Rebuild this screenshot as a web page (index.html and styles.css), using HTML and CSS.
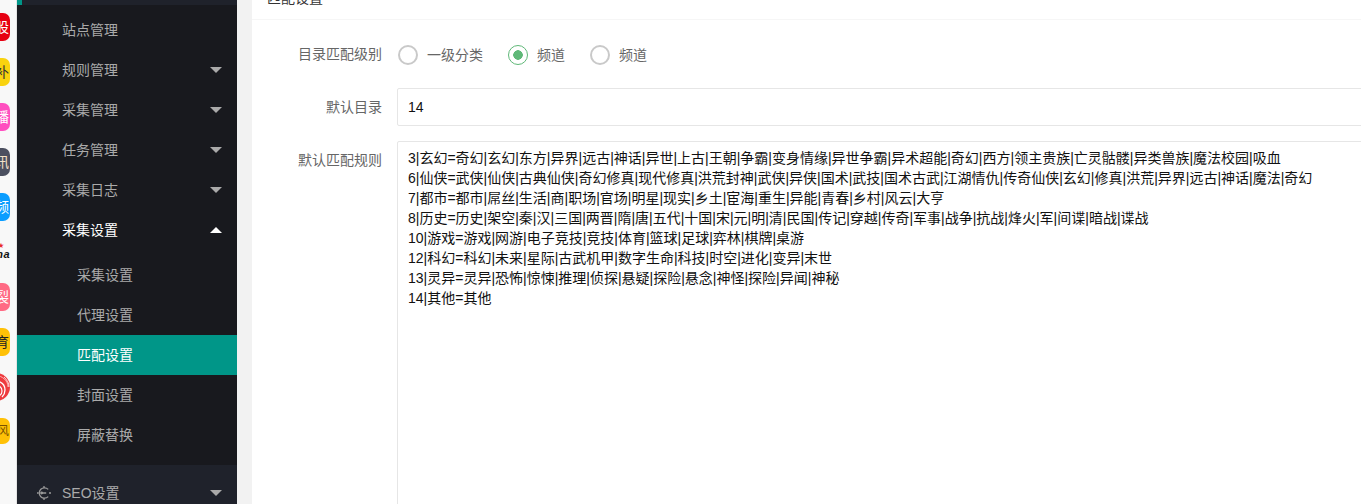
FILE: index.html
```html
<!DOCTYPE html>
<html lang="zh-CN">
<head>
<meta charset="utf-8">
<title>匹配设置</title>
<link rel="stylesheet" href="styles.css">
</head>
<body>
<div class="app">
  <aside class="rail">
    <div class="tile red">股</div>
    <div class="tile yellow">补</div>
    <div class="tile pink">播</div>
    <div class="tile slate">讯</div>
    <div class="tile blue">频</div>
    <div class="logo"><span class="logo-mark">★</span><span class="logo-word">na</span></div>
    <div class="tile rose">裂</div>
    <div class="tile amber">育</div>
    <div class="swirl">
      <svg viewBox="0 0 28 30" width="28" height="30">
        <circle cx="14" cy="15" r="14" fill="#ee3a3e"/>
        <path d="M13 3c8 1 13 6 13 12" fill="none" stroke="#ffb3b3" stroke-width="1"/>
        <path d="M15 9c5 1 8 4 8 9 0 3-1 5-3 7" fill="none" stroke="#fff" stroke-width="1.3"/>
        <path d="M15 13c3 1 5 3 5 6 0 2-1 4-3 5" fill="none" stroke="#fff" stroke-width="1.2"/>
        <path d="M22 5c3 3 5 6 5 10" fill="none" stroke="#fff" stroke-width=".8"/>
      </svg>
    </div>
    <div class="tile amber small">风</div>
  </aside>

  <nav class="sidebar">
    <div class="strip"><span class="strip-mark"></span></div>
    <ul class="menu">
      <li class="item">站点管理</li>
      <li class="item">规则管理<span class="caret"></span></li>
      <li class="item">采集管理<span class="caret"></span></li>
      <li class="item">任务管理<span class="caret"></span></li>
      <li class="item">采集日志<span class="caret"></span></li>
      <li class="item open">采集设置<span class="caret up"></span></li>
    </ul>
    <ul class="submenu">
      <li class="subitem">采集设置</li>
      <li class="subitem">代理设置</li>
      <li class="subitem active">匹配设置</li>
      <li class="subitem">封面设置</li>
      <li class="subitem">屏蔽替换</li>
    </ul>
    <div class="section">
      <div class="item">
        <svg class="seo-icon" viewBox="0 0 14 14" width="14" height="14" fill="none" stroke="#9a9a9a" stroke-width="1.3">
          <path d="M11.2 3.4A5.2 5.2 0 1 0 11.2 10.6"/>
          <path d="M7 0v2M7 12v2M0 7h1.6M4.4 7h4.8M12 7h2"/>
          <circle cx="4.6" cy="7" r=".8" fill="#9a9a9a"/>
        </svg>
        SEO设置<span class="caret"></span>
      </div>
    </div>
  </nav>

  <main class="main">
    <section class="card">
      <header class="card-header">匹配设置</header>
      <form class="form">
        <div class="row">
          <label class="label">目录匹配级别</label>
          <div class="radios">
            <span class="radio"><i class="circle"></i>一级分类</span>
            <span class="radio on"><i class="circle"></i>频道</span>
            <span class="radio"><i class="circle"></i>频道</span>
          </div>
        </div>
        <div class="row">
          <label class="label">默认目录</label>
          <input class="input" type="text" value="14">
        </div>
        <div class="row">
          <label class="label label-area">默认匹配规则</label>
          <textarea class="area" readonly>3|玄幻=奇幻|玄幻|东方|异界|远古|神话|异世|上古|王朝|争霸|变身情缘|异世争霸|异术超能|奇幻|西方|领主贵族|亡灵骷髅|异类兽族|魔法校园|吸血
6|仙侠=武侠|仙侠|古典仙侠|奇幻修真|现代修真|洪荒封神|武侠|异侠|国术|武技|国术古武|江湖情仇|传奇仙侠|玄幻|修真|洪荒|异界|远古|神话|魔法|奇幻
7|都市=都市|屌丝|生活|商|职场|官场|明星|现实|乡土|宦海|重生|异能|青春|乡村|风云|大亨
8|历史=历史|架空|秦|汉|三国|两晋|隋|唐|五代|十国|宋|元|明|清|民国|传记|穿越|传奇|军事|战争|抗战|烽火|军|间谍|暗战|谍战
10|游戏=游戏|网游|电子竞技|竞技|体育|篮球|足球|弈林|棋牌|桌游
12|科幻=科幻|未来|星际|古武机甲|数字生命|科技|时空|进化|变异|末世
13|灵异=灵异|恐怖|惊悚|推理|侦探|悬疑|探险|悬念|神怪|探险|异闻|神秘
14|其他=其他</textarea>
        </div>
      </form>
    </section>
  </main>
</div>
</body>
</html>
```

FILE: styles.css
```css
* { box-sizing: border-box; }
html, body { margin: 0; height: 100%; overflow: hidden; }
body {
  font-family: "Liberation Sans", "Noto Sans CJK SC", sans-serif;
  font-size: 14px;
  color: #666;
  background: #f2f2f2;
}
ul { list-style: none; margin: 0; padding: 0; }

.app { display: flex; height: 504px; overflow: hidden; }

/* left rail of clipped tiles */
.rail {
  flex: 0 0 17px;
  height: 504px;
  overflow: hidden;
  padding-top: 13px;
  background: #f8f8f8;
  border-right: 1px solid #e4e4e4;
}
.tile, .logo, .swirl {
  width: 28px;
  height: 28px;
  margin: 0 0 17px -18px;
}
.tile {
  display: flex;
  align-items: center;
  justify-content: flex-end;
  padding-right: 1px;
  border-radius: 7px;
  font-size: 14px;
  line-height: 28px;
  color: #fff;
}
.red { background: #e60012; }
.yellow { background: #f9d30f; color: #333; }
.pink { background: #ff4fc0; }
.slate { background: #4c5060; color: #f5e2c8; }
.blue { background: #0a9dff; }
.rose { background: #ff6a84; }
.amber { background: #ffc107; color: #222; }
.small { height: 26px; color: #7a5200; font-size: 12px; margin-top: 1px; }
.logo {
  display: flex;
  flex-direction: column;
  align-items: flex-end;
  padding-top: 3px;
}
.logo-mark {
  margin-right: 6px;
  font-size: 6px;
  line-height: 9px;
  color: #e8292c;
}
.logo-word {
  font-weight: 700;
  font-style: italic;
  font-size: 11px;
  line-height: 9px;
  letter-spacing: .5px;
  color: #111;
}
.swirl { overflow: visible; margin-top: -1px; margin-bottom: 18px; }
.swirl svg { display: block; }

/* sidebar */
.sidebar {
  flex: 0 0 220px;
  height: 504px;
  overflow: hidden;
  display: flex;
  flex-direction: column;
  background: #18191e;
  color: #aaa;
}
.strip { flex: 0 0 5px; background: #1f222b; }
.strip-mark { display: block; width: 5px; height: 5px; background: #009688; }
.menu { padding-top: 5px; }
.item {
  position: relative;
  display: flex;
  align-items: center;
  height: 40px;
  padding-left: 45px;
  line-height: 40px;
}
.item.open { color: #fff; }
.caret {
  position: absolute;
  right: 15px;
  top: 17px;
  width: 0;
  height: 0;
  border-left: 6px solid transparent;
  border-right: 6px solid transparent;
  border-top: 6px solid #aaa;
}
.caret.up { border-top: 0; border-bottom: 6px solid #fff; }
.submenu { padding: 5px 0 10px; }
.subitem { height: 40px; padding-left: 60px; line-height: 40px; }
.subitem.active { background: #009688; color: #fff; }
.section { flex: 1; padding-top: 8px; background: #1f222b; }
.seo-icon { position: absolute; left: 20px; top: 13px; }

/* main */
.main { flex: 1; min-width: 0; padding-left: 15px; overflow: hidden; }
.card { width: 1400px; margin-top: -23px; background: #fff; height: 800px; }
.card-header {
  height: 43px;
  padding: 0 15px;
  line-height: 42px;
  color: #333;
  border-bottom: 1px solid #f6f6f6;
}
.form { padding-top: 15px; }
.row { display: flex; margin-bottom: 15px; }
.label {
  flex: 0 0 145px;
  padding-right: 15px;
  text-align: right;
  line-height: 38px;
  color: #666;
}
.radios { display: flex; align-items: center; height: 38px; }
.radio { display: flex; align-items: center; color: #666; margin-right: 25px; }
.radio:first-child { margin-left: 1px; }
.circle {
  display: block;
  width: 20px;
  height: 20px;
  margin-top: 1px;
  margin-right: 9px;
  border: 2px solid #c9c9c9;
  border-radius: 50%;
  background: #fff;
}
.radio.on .circle {
  border: 1.5px solid #5fb878;
  background: radial-gradient(circle, #5fb878 0 4.5px, #fff 5px);
}
.input, .area {
  flex: 0 0 1000px;
  width: 1000px;
  font-family: "Liberation Sans", "Noto Sans CJK SC", sans-serif;
  font-size: 14px;
  color: #111;
  background: #fff;
  border: 1px solid #e6e6e6;
  border-radius: 2px;
  outline: 0;
}
.input { height: 38px; padding: 0 10px; }
.area {
  height: 500px;
  padding: 6px 10px;
  line-height: 20px;
  white-space: pre;
  overflow: hidden;
  resize: none;
}
```
